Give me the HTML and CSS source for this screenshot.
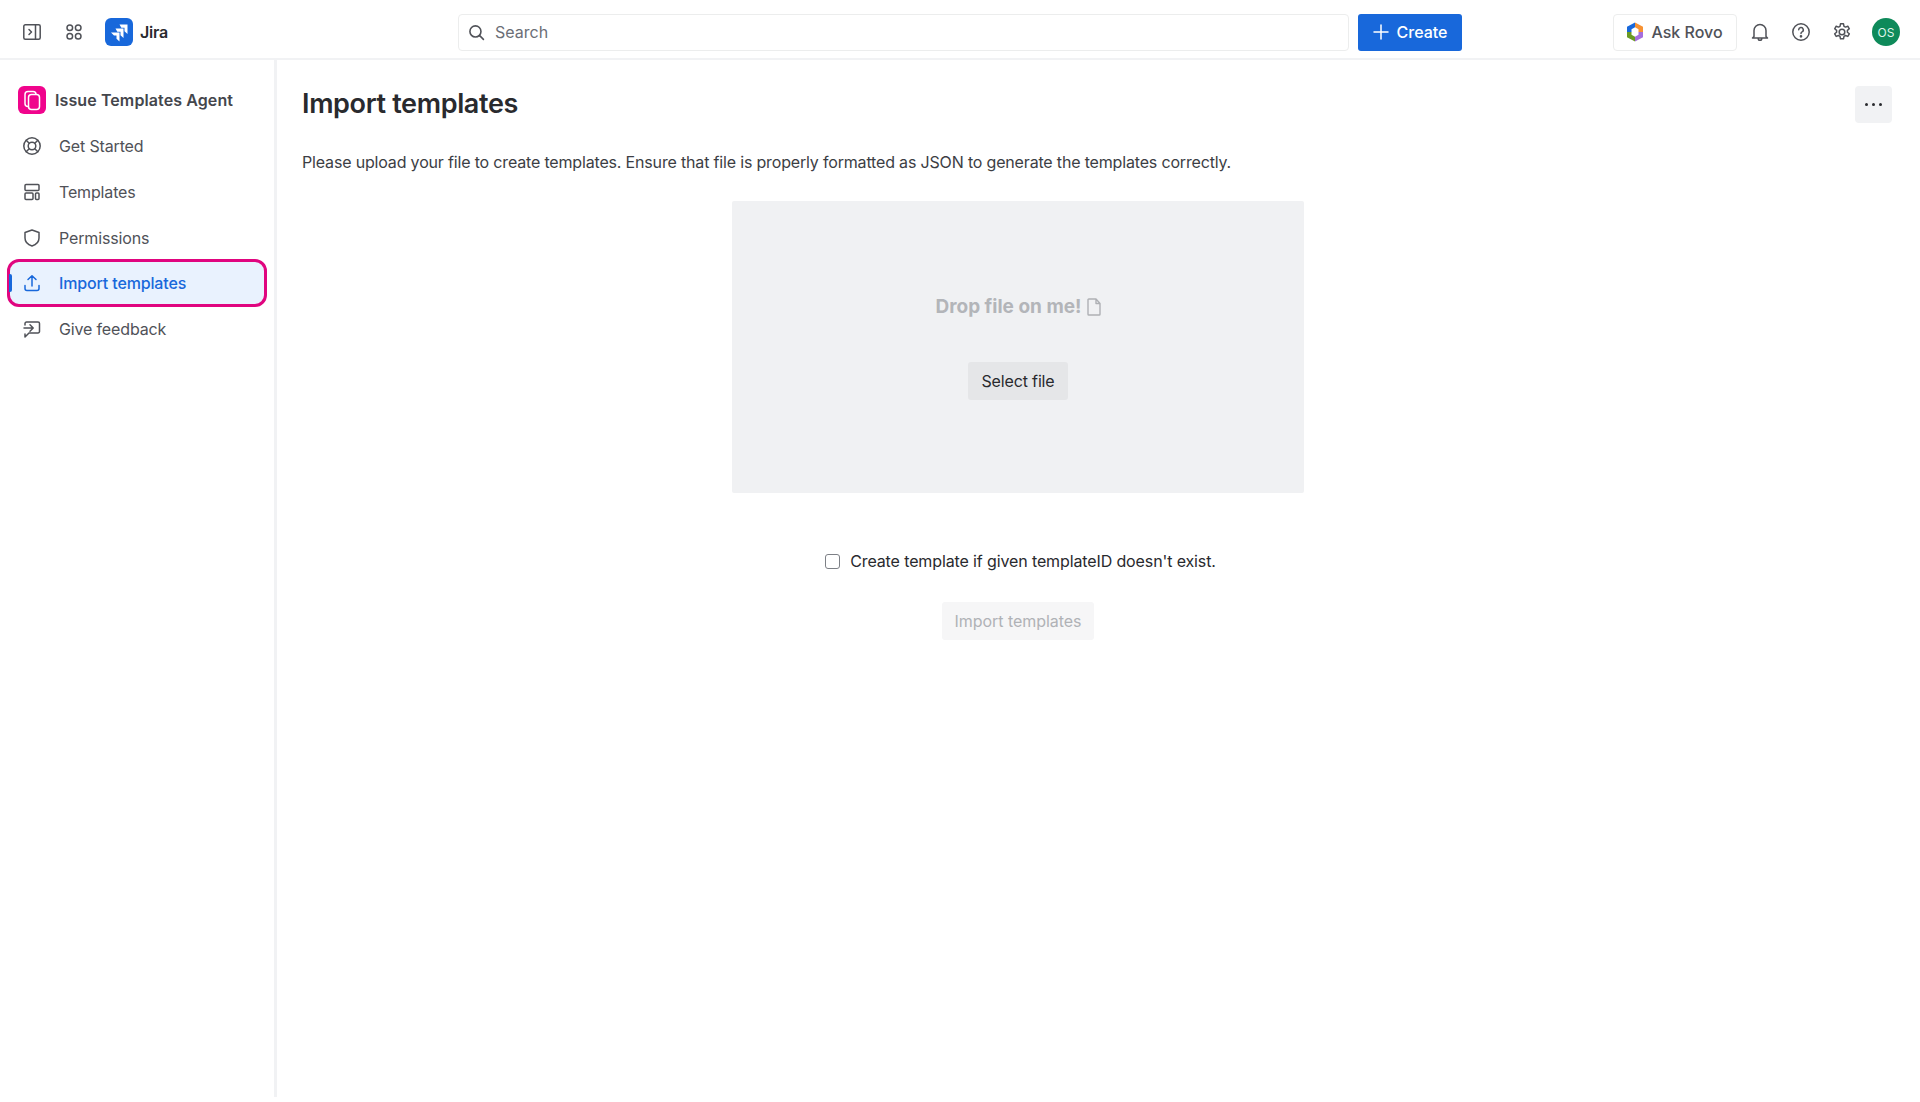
FILE: index.html
```html
<!DOCTYPE html>
<html lang="en">
<head>
<meta charset="utf-8">
<title>Import templates</title>
<link rel="stylesheet" href="styles.css">
</head>
<body>
<header class="topbar">
  <div class="top-left">
    <svg class="ico" viewBox="0 0 20 20" width="20" height="20"><rect x="1.8" y="2.8" width="16.4" height="14.4" rx="1.5"/><path d="M13.5 3v14M7 7.5l2.5 2.5L7 12.5"/></svg>
    <svg class="ico" viewBox="0 0 20 20" width="20" height="20"><circle cx="5.8" cy="5.8" r="2.8"/><circle cx="14.2" cy="5.8" r="2.8"/><circle cx="5.8" cy="14.2" r="2.8"/><circle cx="14.2" cy="14.2" r="2.8"/></svg>
    <div class="brand">
      <svg class="logo" viewBox="0 0 28 28" width="28" height="28"><rect width="28" height="28" rx="6" fill="#1868db"/><path d="M14.5 6.5h8v9.500l-3-2.800V9.800h-3.200z M10.500 10.500h8v9.500l-3-2.800v-3.400h-3.200z M6 14.500h8.500v9l-3-2.800v-3.200H9z" fill="#fff"/></svg>
      <span class="brand-name">Jira</span>
    </div>
  </div>
  <div class="top-center">
    <div class="search">
      <svg class="ico search-ico" viewBox="0 0 16 16" width="17" height="17"><circle cx="7" cy="7" r="5.2"/><path d="M11 11l3.500 3.500"/></svg>
      <span>Search</span>
    </div>
    <button class="create"><svg viewBox="0 0 16 16" width="16" height="16"><path d="M8 1v14M1 8h14"/></svg>Create</button>
  </div>
  <div class="top-right">
    <button class="rovo">
      <svg viewBox="0 0 16 20" width="16" height="20">
        <path d="M8 0.500l8 4.300v5.200h-4.500V7.300L8 5.300z" fill="#f79233"/>
        <path d="M16 10v5.200l-8 4.300v-4.800l3.500-2V10z" fill="#a56ddd"/>
        <path d="M8 19.500l-8-4.300V10h4.500v2.700L8 14.700z" fill="#6a9a23"/>
        <path d="M0 10V4.800l8-4.300v4.800l-3.500 2V10z" fill="#1868db"/>
      </svg>
      Ask Rovo
    </button>
    <svg class="ico r-ico" viewBox="0 0 20 20" width="20" height="20"><path d="M4 14.500V8.500a6 6 0 0 1 12 0v6l1.500 1.500h-15zM8.200 16.500a1.800 1.800 0 0 0 3.600 0"/></svg>
    <svg class="ico r-ico" viewBox="0 0 20 20" width="20" height="20"><circle cx="10" cy="10" r="8.200"/><path d="M7.700 7.800a2.300 2.300 0 1 1 3.300 2.100c-.7.300-1 .8-1 1.600"/><circle class="dot" cx="10" cy="14.300" r=".6"/></svg>
    <svg class="ico r-ico" viewBox="0 0 20 20" width="20" height="20"><circle cx="10" cy="10" r="2.800"/><path d="M8.500 1.800h3l.5 2.500 1.500.8 2.300-.9 1.500 2.600-1.900 1.600v1.800l1.900 1.600-1.500 2.600-2.300-.9-1.500.8-.5 2.500h-3l-.5-2.500-1.500-.8-2.300.9-1.500-2.600 1.900-1.600V8.400L2.700 6.800l1.500-2.600 2.300.9 1.500-.8z"/></svg>
    <div class="avatar">OS</div>
  </div>
</header>
<div class="shell">
  <nav class="sidebar">
    <div class="app-title">
      <svg class="app-logo" viewBox="0 0 28 28" width="28" height="28"><rect width="28" height="28" rx="6" fill="#f0048c"/><rect x="7" y="5.500" width="11" height="15" rx="3" fill="none" stroke="#fff" stroke-width="1.500"/><rect x="10.500" y="8.500" width="11" height="15" rx="3" fill="#f0048c" stroke="#fff" stroke-width="1.500"/></svg>
      <span>Issue Templates Agent</span>
    </div>
    <ul class="nav">
      <li class="nav-item">
        <svg class="ico" viewBox="0 0 20 20" width="20" height="20"><circle cx="10" cy="10" r="8.200"/><circle cx="10" cy="10" r="3.800"/><path d="M4.200 4.200l3 3M15.800 4.200l-3 3M4.200 15.800l3-3M15.800 15.800l-3-3"/></svg>
        Get Started
      </li>
      <li class="nav-item">
        <svg class="ico" viewBox="0 0 20 20" width="20" height="20"><rect x="3" y="2.500" width="14" height="6" rx="1"/><rect x="3" y="11" width="8" height="6.500" rx="1"/><rect x="13.500" y="11" width="3.500" height="6.500" rx="1"/></svg>
        Templates
      </li>
      <li class="nav-item">
        <svg class="ico" viewBox="0 0 20 20" width="20" height="20"><path d="M10 2l7 2.500v5.500c0 4-3 6.800-7 8-4-1.200-7-4-7-8V4.500z"/></svg>
        Permissions
      </li>
      <li class="nav-item active">
        <svg class="ico" viewBox="0 0 20 20" width="20" height="20"><path d="M10 13V3M6 6.500L10 2.800l4 3.700M3 12.500v3a2 2 0 0 0 2 2h10a2 2 0 0 0 2-2v-3"/></svg>
        Import templates
      </li>
      <li class="nav-item">
        <svg class="ico" viewBox="0 0 20 20" width="20" height="20"><path d="M3 6V4.500A1.500 1.500 0 0 1 4.500 3h11.500A1.500 1.500 0 0 1 17.500 4.500v8a1.500 1.500 0 0 1-1.500 1.500H7L3 18v-3"/><path d="M2 9h9M8 5.800L11.200 9 8 12.200"/></svg>
        Give feedback
      </li>
    </ul>
  </nav>
  <main class="content">
    <div class="page-head">
      <h1>Import templates</h1>
      <button class="more"><i></i><i></i><i></i></button>
    </div>
    <p class="intro">Please upload your file to create templates. Ensure that file is properly formatted as JSON to generate the templates correctly.</p>
    <section class="center-col">
      <div class="dropzone">
        <div class="drop-label">Drop file on me!
          <svg viewBox="0 0 14 18" width="14" height="18"><path d="M1 1.800A.8.800 0 0 1 1.800 1H9l4 4.500v10.700a.8.800 0 0 1-.8.800H1.800a.8.800 0 0 1-.8-.8zM9 1v4.500h4"/></svg>
        </div>
        <button class="select-file">Select file</button>
      </div>
      <label class="check-row"><span class="check"></span>Create template if given templateID doesn't exist.</label>
      <button class="import-btn">Import templates</button>
    </section>
  </main>
</div>
</body>
</html>
```
FILE: styles.css
```css
* { box-sizing: border-box; }
html, body { margin: 0; height: 100%; }
body {
  font-family: Inter, "Liberation Sans", sans-serif;
  font-size: 16px;
  color: #292a2e;
  background: #fff;
  display: flex;
  flex-direction: column;
  overflow: hidden;
}
button { font: inherit; border: 0; }
.ico { fill: none; stroke: #505258; stroke-width: 1.5; stroke-linecap: round; stroke-linejoin: round; flex: none; }
.ico .dot { fill: #505258; }

.topbar {
  height: 60px;
  flex: none;
  display: flex;
  align-items: center;
  border-bottom: 2px solid #f1f2f4;
  padding-top: 6px;
}
.top-left { width: 458px; display: flex; align-items: center; padding-left: 22px; gap: 22px; flex: none; }
.brand { display: flex; align-items: center; gap: 7px; margin-left: -1px; }
.logo { display: block; }
.brand-name { font-size: 16px; font-weight: 600; color: #292a2e; letter-spacing: -0.2px; }
.top-center { display: flex; align-items: center; gap: 9px; }
.search {
  width: 891px;
  height: 37px;
  border: 1px solid #eceded;
  border-radius: 4px;
  display: flex;
  align-items: center;
  padding-left: 9px;
  gap: 10px;
  font-size: 16px;
  color: #6b6e76;
}
.create {
  width: 104px;
  height: 37px;
  background: #1868db;
  border-radius: 3px;
  color: #fff;
  font-weight: 500;
  display: flex;
  align-items: center;
  justify-content: center;
  gap: 8px;
}
.create svg { fill: none; stroke: #fff; stroke-width: 1.5; stroke-linecap: round; }
.top-right { margin-left: auto; display: flex; align-items: center; padding-right: 20px; gap: 21px; }
.rovo {
  width: 124px;
  height: 37px;
  background: #fff;
  border: 1px solid #eceded;
  border-radius: 4px;
  color: #505258;
  font-weight: 500;
  display: flex;
  align-items: center;
  justify-content: center;
  gap: 8px;
  margin-right: -8px;
}
.avatar {
  width: 28px;
  height: 28px;
  border-radius: 50%;
  background: #0e8a5a;
  color: #dff5ea;
  font-size: 12px;
  display: flex;
  align-items: center;
  justify-content: center;
  margin-left: -1px;
}

.shell { flex: 1; display: flex; min-height: 0; }
.sidebar { width: 277px; flex: none; border-right: 3px solid #f1f2f4; padding: 26px 7px 0; margin-bottom: 5px; }
.app-title { display: flex; align-items: center; gap: 9px; height: 28px; padding-left: 11px; font-weight: 600; color: #44464c; letter-spacing: 0.1px; }
.app-logo { flex: none; display: block; }
.nav { list-style: none; margin: 9px 0 0; padding: 0; }
.nav-item {
  height: 46px;
  display: flex;
  align-items: center;
  gap: 17px;
  padding-left: 15px;
  color: #505258;
  font-size: 16px;
  letter-spacing: -0.15px;
  position: relative;
}
.nav-item.active {
  background: #e9f2fe;
  color: #1868db;
  font-weight: 500;
  border: 3px solid #e0057f;
  border-radius: 12px;
  width: 260px;
  height: 48px;
  margin: -2px 0 -1px;
  padding-left: 12px;
}
.nav-item.active::before {
  content: "";
  position: absolute;
  left: -1px;
  top: 12px;
  width: 3px;
  height: 18px;
  background: #1868db;
  border-radius: 0 2px 2px 0;
}
.nav-item.active .ico { stroke: #1868db; }

.content { flex: 1; min-width: 0; padding: 23px 28px 0 25px; }
.page-head { display: flex; justify-content: space-between; align-items: flex-start; height: 60px; }
h1 { margin: 0; font-size: 27px; line-height: 42px; font-weight: 600; color: #292a2e; letter-spacing: -0.35px; }
.more {
  width: 37px;
  height: 37px;
  margin-top: 3px;
  background: #f1f2f4;
  border-radius: 4px;
  display: flex;
  align-items: center;
  justify-content: center;
  gap: 4px;
}
.more i { width: 3px; height: 3px; border-radius: 50%; background: #292a2e; }
.intro { margin: 7px 0 0; font-size: 16px; line-height: 24px; color: #3c3e44; letter-spacing: -0.17px; }
.center-col { width: 1432px; display: flex; flex-direction: column; align-items: center; }
.dropzone {
  width: 572px;
  height: 292px;
  margin-top: 27px;
  background: #f0f1f3;
  border-radius: 2px;
  display: flex;
  flex-direction: column;
  align-items: center;
  padding-top: 94px;
}
.drop-label { display: flex; align-items: center; gap: 5px; height: 24px; font-size: 19px; font-weight: 700; color: #b3b5b9; line-height: 24px; }
.drop-label svg { fill: none; stroke: #aeb0b4; stroke-width: 1.4; stroke-linejoin: round; }
.select-file {
  margin-top: 43px;
  width: 100px;
  height: 38px;
  background: #e5e6e8;
  border-radius: 3px;
  color: #292a2e;
  font-size: 16px;
  letter-spacing: -0.15px;
}
.check-row { margin-top: 56px; margin-left: 5px; height: 24px; display: flex; align-items: center; gap: 10px; font-size: 16px; color: #292a2e; letter-spacing: -0.12px; }
.check { width: 15px; height: 15px; border: 1px solid #7d8086; border-radius: 3px; background: #fff; }
.import-btn {
  margin-top: 29px;
  width: 152px;
  height: 38px;
  background: #f6f6f7;
  border-radius: 3px;
  color: #b0b2b6;
  font-size: 16px;
  letter-spacing: -0.05px;
}
```
